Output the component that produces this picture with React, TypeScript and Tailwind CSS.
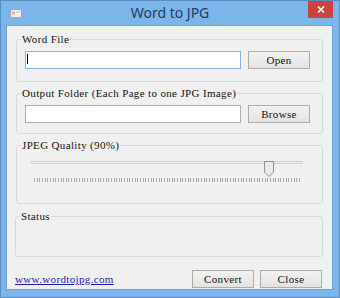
import { ReactNode, useState } from "react";

// shared look of the dialog's small serif UI font (colour set per use)
const uiFont =
  "font-['Liberation_Serif',serif] text-[11px] leading-[10px] tracking-[0.35px]";

const GroupBox = ({
  title,
  className = "",
  children,
}: {
  title: string;
  className?: string;
  children?: ReactNode;
}) => (
  <fieldset
    className={`rounded-[3px] border border-[#d9d9d9] px-[4px] ${className}`}
  >
    <legend className={`px-[1px] text-[#111111] ${uiFont}`}>{title}</legend>
    <div className="px-[4px]">{children}</div>
  </fieldset>
);

const Button = ({ label }: { label: string }) => (
  <button
    className={`flex h-[18px] w-[62px] items-center justify-center border border-[#acacac] bg-linear-to-b from-[#f2f2f2] to-[#e3e3e3] text-[#111111] ${uiFont}`}
  >
    {label}
  </button>
);

const TextBox = ({ focused = false }: { focused?: boolean }) => (
  <div className="relative">
    <input
      readOnly
      className={`block h-[18px] w-[216px] border bg-white outline-none ${
        focused ? "border-[#7eb4ea]" : "border-[#abadb3]"
      }`}
    />
    {focused && (
      <span className="pointer-events-none absolute left-[2px] top-[3px] h-[10px] w-px bg-black" />
    )}
  </div>
);

const TICKS = Array.from({ length: 101 }, (_, i) => i);

const QualitySlider = ({ value }: { value: number }) => {
  // thumb center runs from 10px to 270px inside the slider box
  const left = 10 + (value / 100) * 260 - 5;
  return (
    <div className="pt-[5px]">
      <div className="relative h-[16px]">
        <div className="ml-[6px] mt-[6px] h-[3px] w-[272px] border border-[#d3d3d3] bg-[#e8e8e8]" />
        <svg
          className="absolute top-0"
          style={{ left }}
          width="10"
          height="16"
          viewBox="0 0 10 16"
        >
          <path
            d="M0.5 0.5 H9.5 V11 L5 15.5 L0.5 11 Z"
            fill="#eaeaea"
            stroke="#8e8e8e"
          />
        </svg>
      </div>
      <svg className="mt-[1px] block" width="287" height="4">
        {TICKS.map((i) => {
          const x = Math.round(9 + i * 2.65) + 0.5;
          return (
            <line key={i} x1={x} x2={x} y1="0" y2="4" stroke="#a9a9a9" />
          );
        })}
      </svg>
    </div>
  );
};

export default function App() {
  const [quality] = useState(90);

  return (
    <div className="flex h-[298px] w-[340px] flex-col border border-[#5a8ec2] bg-[#7cb5e9]">
      {/* title bar */}
      <div className="grid h-[24px] shrink-0 grid-cols-[1fr_auto_1fr] items-center">
        <div className="pl-[9px]">
          <svg width="12" height="9" viewBox="0 0 12 9">
            <rect x="0.5" y="0.5" width="11" height="8" rx="1.5" fill="#f1f1f1" stroke="#a7a7a7" />
            <rect x="2" y="2.5" width="3" height="3" fill="#e3b2b2" />
            <rect x="6" y="2.5" width="4" height="1" fill="#c9c9c9" />
          </svg>
        </div>
        <div className="font-['Noto_Sans',sans-serif] text-[14px] leading-[20px] text-[#213d5f]">
          Word to JPG
        </div>
        <div className="flex self-start justify-end pr-[6px]">
          <button className="flex h-[17px] w-[25px] items-center justify-center bg-[#c9443e]">
            <svg width="8" height="7" viewBox="0 0 8 7">
              <path d="M1 0.5 L7 6.5 M7 0.5 L1 6.5" stroke="#ffffff" strokeWidth="1.6" />
            </svg>
          </button>
        </div>
      </div>

      {/* client area */}
      <div className="ml-[5px] mr-[6px] flex h-[265px] flex-col border border-[#6ba3d8] bg-[#f0f0f0] px-[9px] pt-[8px]">
        <GroupBox title="Word File">
          <div className="flex items-center gap-[7px] pb-[12px] pt-[7px]">
            <TextBox focused />
            <Button label="Open" />
          </div>
        </GroupBox>

        <GroupBox title="Output Folder (Each Page to one JPG Image)" className="mt-[6px]">
          <div className="flex items-center gap-[7px] pb-[10px] pt-[7px]">
            <TextBox />
            <Button label="Browse" />
          </div>
        </GroupBox>

        <GroupBox title={`JPEG Quality (${quality}%)`} className="mt-[6px]">
          <div className="pb-[21px]">
            <QualitySlider value={quality} />
          </div>
        </GroupBox>

        <GroupBox title="Status" className="-ml-px mt-[7px]">
          <div className="h-[35px]" />
        </GroupBox>

        <div className="mr-px mt-[13px] flex h-[18px] items-center">
          <a
            href="#"
            className={`-ml-px text-[#1c1cb0] underline ${uiFont}`}
          >
            www.wordtojpg.com
          </a>
          <div className="ml-auto flex gap-[6px]">
            <Button label="Convert" />
            <Button label="Close" />
          </div>
        </div>
      </div>
    </div>
  );
}
